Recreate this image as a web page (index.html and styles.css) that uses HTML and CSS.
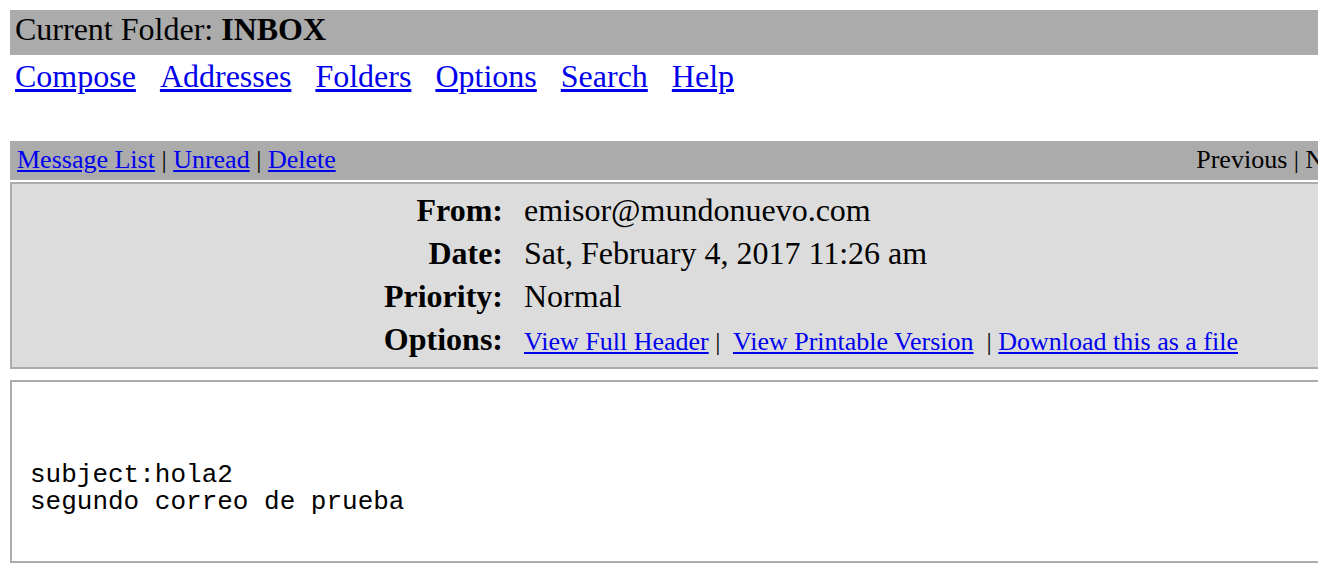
FILE: index.html
```html
<!DOCTYPE html>
<html lang="es">
<head>
<meta charset="utf-8">
<title>SquirrelMail - Read message</title>
<link rel="stylesheet" href="styles.css">
</head>
<body>
<div class="page">
  <div class="folder-bar">Current Folder: <b>INBOX</b></div>
  <nav class="main-nav">
    <a href="#">Compose</a>
    <a href="#">Addresses</a>
    <a href="#">Folders</a>
    <a href="#">Options</a>
    <a href="#">Search</a>
    <a href="#">Help</a>
  </nav>
  <div class="msg-bar">
    <div class="msg-actions"><a href="#">Message List</a> | <a href="#">Unread</a> | <a href="#">Delete</a></div>
    <div class="msg-nav">Previous | Next</div>
  </div>
  <div class="headers">
    <div class="label">From:</div>
    <div class="value">emisor@mundonuevo.com</div>
    <div class="label">Date:</div>
    <div class="value">Sat, February 4, 2017 11:26 am</div>
    <div class="label">Priority:</div>
    <div class="value">Normal</div>
    <div class="label">Options:</div>
    <div class="value"><span class="opts"><a href="#">View Full Header</a>&nbsp;|&nbsp; <a href="#">View Printable Version</a> &nbsp;|&nbsp;<a href="#">Download this as a file</a></span></div>
  </div>
  <div class="body-box">
<pre class="body-text">subject:hola2
segundo correo de prueba</pre>
  </div>
</div>
</body>
</html>
```
FILE: styles.css
```css
html, body {
  margin: 0;
  padding: 0;
  overflow: hidden;
  background: #ffffff;
}

body {
  font-family: "Liberation Serif", "Times New Roman", serif;
  color: #000000;
}

a {
  color: #0000ee;
  text-decoration: underline;
}

.page {
  width: 1352px;
  margin: 10px 0 0 10px;
}

.folder-bar {
  background: #ababab;
  font-size: 32px;
  line-height: 37px;
  height: 37px;
  padding: 1px 5px 7px;
  white-space: nowrap;
}

.main-nav {
  display: flex;
  gap: 24px;
  padding-left: 5px;
  margin: 3px 0 46px;
  font-size: 32px;
  line-height: 37px;
  white-space: nowrap;
}

.msg-bar {
  display: flex;
  justify-content: space-between;
  background: #ababab;
  font-size: 26px;
  line-height: 33px;
  padding: 2px 6px 4px 7px;
  white-space: nowrap;
}

.headers {
  margin-top: 2px;
  background: #dcdcdc;
  border: 2px solid #ababab;
  padding: 5px 0 4px;
  display: grid;
  grid-template-columns: 491px 1fr;
  column-gap: 21px;
  font-size: 32px;
  line-height: 43px;
}

.label {
  font-weight: bold;
  text-align: right;
  white-space: nowrap;
}

.value {
  white-space: nowrap;
}

.opts {
  font-size: 26px;
}

.body-box {
  margin-top: 11px;
  border: 2px solid #ababab;
  background: #ffffff;
  padding: 80px 0 45px 18px;
}

.body-text {
  margin: 0;
  font-family: "Liberation Mono", "Courier New", monospace;
  font-size: 26px;
  line-height: 27px;
}
```
